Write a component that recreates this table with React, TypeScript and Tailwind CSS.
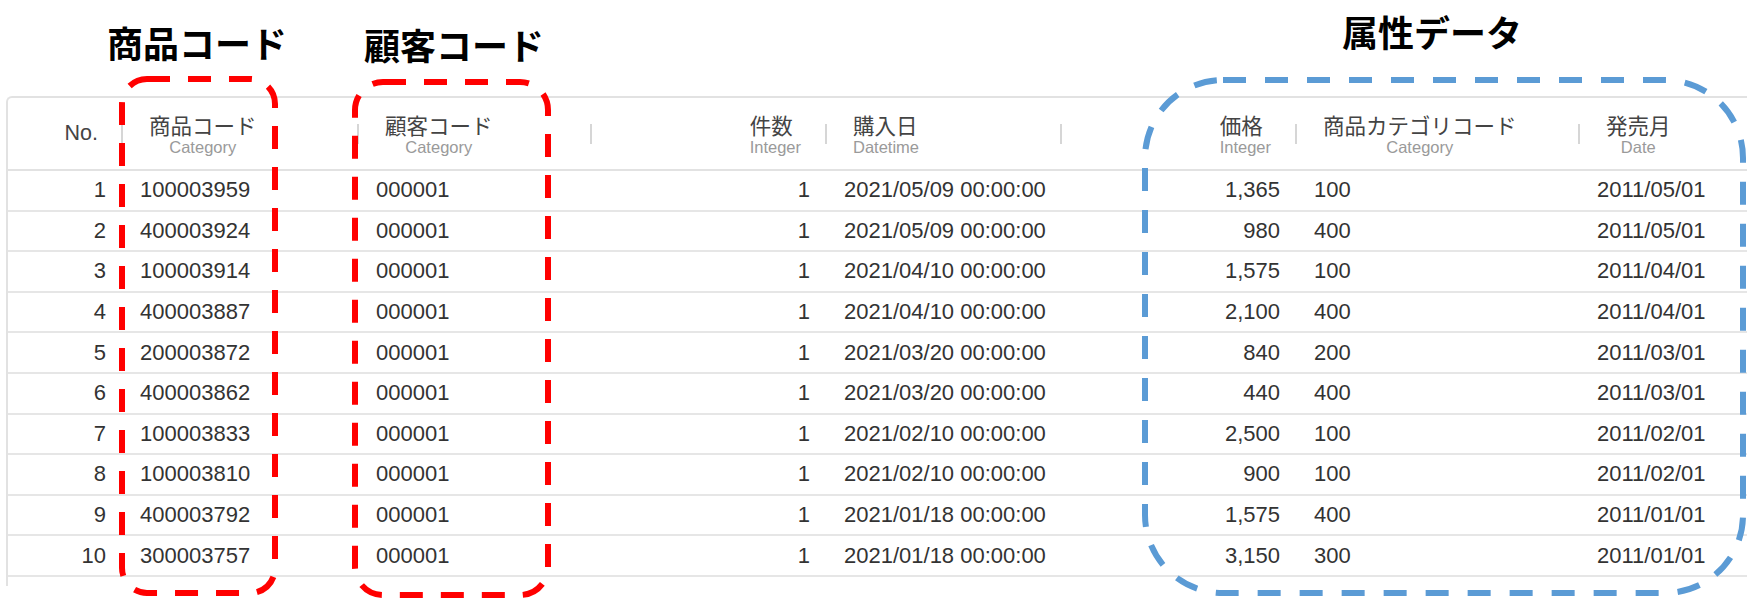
import React from 'react';

type Col = {
  label: string;
  sub?: string;
  width: string;
  kind: 'right' | 'left' | 'center';
  divider: boolean;
};

const cols: Col[] = [
  { label: 'No.', width: 'w-[115px]', kind: 'right', divider: true },
  { label: '商品コード', sub: 'Category', width: 'w-[236px]', kind: 'center', divider: true },
  { label: '顧客コード', sub: 'Category', width: 'w-[233px]', kind: 'center', divider: true },
  { label: '件数', sub: 'Integer', width: 'w-[235px]', kind: 'right', divider: true },
  { label: '購入日', sub: 'Datetime', width: 'w-[235px]', kind: 'left', divider: true },
  { label: '価格', sub: 'Integer', width: 'w-[235px]', kind: 'right', divider: true },
  { label: '商品カテゴリコード', sub: 'Category', width: 'w-[283px]', kind: 'center', divider: true },
  { label: '発売月', sub: 'Date', width: 'w-[141px]', kind: 'center', divider: false },
];

// which data columns are right aligned
const rightCells = [true, false, false, true, false, true, false, true];

const rows: string[][] = [
  ['1', '100003959', '000001', '1', '2021/05/09 00:00:00', '1,365', '100', '2011/05/01'],
  ['2', '400003924', '000001', '1', '2021/05/09 00:00:00', '980', '400', '2011/05/01'],
  ['3', '100003914', '000001', '1', '2021/04/10 00:00:00', '1,575', '100', '2011/04/01'],
  ['4', '400003887', '000001', '1', '2021/04/10 00:00:00', '2,100', '400', '2011/04/01'],
  ['5', '200003872', '000001', '1', '2021/03/20 00:00:00', '840', '200', '2011/03/01'],
  ['6', '400003862', '000001', '1', '2021/03/20 00:00:00', '440', '400', '2011/03/01'],
  ['7', '100003833', '000001', '1', '2021/02/10 00:00:00', '2,500', '100', '2011/02/01'],
  ['8', '100003810', '000001', '1', '2021/02/10 00:00:00', '900', '100', '2011/02/01'],
  ['9', '400003792', '000001', '1', '2021/01/18 00:00:00', '1,575', '400', '2011/01/01'],
  ['10', '300003757', '000001', '1', '2021/01/18 00:00:00', '3,150', '300', '2011/01/01'],
  ['', '', '', '', '', '', '', ''],
];

const jp = "font-['Noto_Sans_CJK_JP',sans-serif]";

function HeaderCell({ col }: { col: Col }) {
  let content: React.ReactNode;
  if (!col.sub) {
    content = (
      <div className="flex-1 flex justify-end pr-[23px]">
        <span className="text-[21.5px] leading-none text-[#444] font-['Liberation_Sans',sans-serif]">{col.label}</span>
      </div>
    );
  } else {
    const pos = col.kind === 'right' ? 'justify-end pr-[24px]' : 'justify-start pl-[26px]';
    const items = col.kind === 'center' ? 'items-center' : 'items-start';
    content = (
      <div className={`flex-1 flex ${pos}`}>
        <div className={`flex flex-col ${items}`}>
          <span className={`${jp} text-[21.5px] leading-[27px] text-[#444] whitespace-nowrap`}>{col.label}</span>
          <span className="text-[16.5px] leading-[19px] text-[#9a9a9a] whitespace-nowrap">{col.sub}</span>
        </div>
      </div>
    );
  }
  return (
    <div className={`${col.width} shrink-0 flex items-center`}>
      {content}
      {col.divider ? <div className="w-[2px] h-[20px] bg-[#d6d6d6] shrink-0" /> : <div className="w-[2px] shrink-0" />}
    </div>
  );
}

export default function App() {
  return (
    <div className="relative w-[1747px] h-[601px] bg-white overflow-hidden font-['Liberation_Sans',sans-serif]">
      <div className="pt-[96px] pl-[6px] h-[586px]">
        <div className="h-full border-l-2 border-t-2 border-[#e2e2e2] rounded-tl-[6px] overflow-hidden">
          {/* header */}
          <div className="flex h-[73px] border-b-2 border-[#e2e2e2]">
            {cols.map((c) => (
              <HeaderCell key={c.label} col={c} />
            ))}
            <div className="flex-1" />
          </div>
          {/* body */}
          {rows.map((r, i) => (
            <div key={i} className="flex h-[40.6px] border-b-2 border-[#e6e6e6] items-center">
              {r.map((v, j) => (
                <div
                  key={j}
                  className={`${cols[j].width} shrink-0 px-[17px] text-[22px] leading-none text-[#333] whitespace-nowrap ${
                    rightCells[j] ? 'text-right' : 'text-left'
                  }`}
                >
                  {v}
                </div>
              ))}
              <div className="flex-1" />
            </div>
          ))}
        </div>
      </div>

      {/* annotations */}
      <svg className="absolute inset-0 pointer-events-none" width="1747" height="601">
        <rect x="122" y="79" width="153" height="514" rx="25" fill="none" stroke="#ff0000" strokeWidth="6" strokeDasharray="23 18" />
        <rect x="355" y="82" width="193" height="513" rx="28" fill="none" stroke="#ff0000" strokeWidth="6" strokeDasharray="23 18" />
        <rect x="1145" y="80" width="598" height="513" rx="78" fill="none" stroke="#5b9bd5" strokeWidth="6" strokeDasharray="23 19" />
      </svg>
      <div className={`absolute left-[107px] top-[24px] ${jp} font-bold text-[36px] leading-none text-black`}>商品コード</div>
      <div className={`absolute left-[364px] top-[26px] ${jp} font-bold text-[36px] leading-none text-black`}>顧客コード</div>
      <div className={`absolute left-[1342px] top-[13px] ${jp} font-bold text-[36px] leading-none text-black`}>属性データ</div>
    </div>
  );
}
